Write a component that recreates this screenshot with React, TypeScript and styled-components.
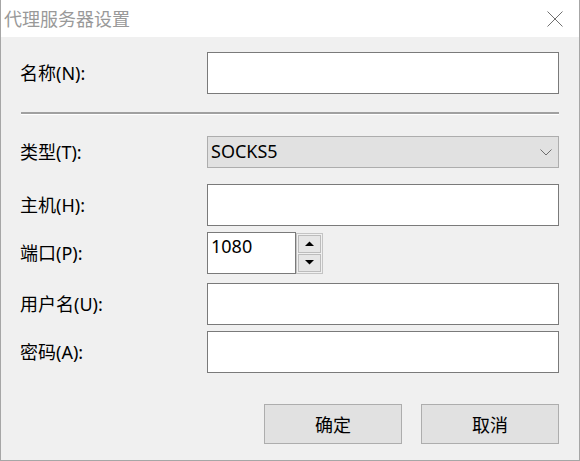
import React from "react";
import styled, { createGlobalStyle } from "styled-components";

const Global = createGlobalStyle`
  html, body { margin: 0; padding: 0; background: #f0f0f0; }
  * { box-sizing: border-box; }
`;

const FONT = `"Noto Sans", "Noto Sans CJK SC", sans-serif`;

const Window = styled.div`
  width: 580px;
  height: 461px;
  background: #f0f0f0;
  border-left: 1px solid #a6a6a6;
  border-right: 1px solid #a6a6a6;
  border-bottom: 1px solid #a6a6a6;
  font-family: ${FONT};
  font-size: 18px;
  color: #000;
  display: flex;
  flex-direction: column;
`;

const TitleBar = styled.div`
  height: 37px;
  background: #fff;
  display: flex;
  align-items: center;
  justify-content: space-between;
  padding: 0 16px 0 3px;
  flex: none;
`;

const Title = styled.span`
  color: #999999;
  font-size: 18px;
  line-height: 1;
  margin-top: 1px;
`;

const CloseBtn = styled.div`
  width: 16px;
  height: 16px;
  display: flex;
  margin-top: 1px;
`;

const Body = styled.div`
  padding: 0 20px 0 19px;
  display: flex;
  flex-direction: column;
`;

const Row = styled.div<{ $mt: number; $h: number }>`
  display: grid;
  grid-template-columns: 187px 352px;
  align-items: center;
  margin-top: ${(p) => p.$mt}px;
  height: ${(p) => p.$h}px;
`;

const Label = styled.label`
  font-size: 18px;
  line-height: 1;
  white-space: nowrap;
`;

const TextBox = styled.input<{ $w?: number }>`
  width: ${(p) => (p.$w ? `${p.$w}px` : "100%")};
  height: 42px;
  border: 1px solid #7a7a7a;
  background: #fff;
  font-family: ${FONT};
  font-size: 18px;
  color: #000;
  padding: 0 3px;
  outline: none;
  margin: 0;
`;

const PortBox = styled(TextBox)`
  padding-bottom: 14px;
`;

const Separator = styled.div`
  margin-top: 18px;
  height: 3px;
  margin-left: 1px;
  border-top: 2px solid #a0a0a0;
  border-bottom: 1px solid #ffffff;
`;

const Select = styled.div`
  height: 32px;
  border: 1px solid #adadad;
  background: #e1e1e1;
  display: flex;
  align-items: center;
  justify-content: space-between;
  padding: 0 6px 0 3px;
  font-size: 18px;
`;

const SelectText = styled.span`
  line-height: 1;
  margin-top: -2px;
`;

const PortWrap = styled.div`
  display: flex;
  align-items: center;
`;

const Spinner = styled.div`
  width: 27px;
  height: 41px;
  border: 1px solid #c4c4c4;
  padding: 1px;
  display: flex;
  flex-direction: column;
  gap: 1px;
`;

const SpinBtn = styled.div`
  flex: 1;
  background: #e6e6e6;
  border: 1px solid #bcbcbc;
  display: flex;
  align-items: center;
  justify-content: center;
`;

const Footer = styled.div`
  margin-top: 31px;
  display: flex;
  justify-content: flex-end;
  gap: 19px;
  height: 40px;
`;

const Button = styled.button`
  width: 138px;
  height: 40px;
  border: 1px solid #adadad;
  background: #e1e1e1;
  font-family: ${FONT};
  font-size: 18px;
  color: #000;
  padding: 0;
  margin: 0;
  display: flex;
  align-items: center;
  justify-content: center;
`;

const Arrow = ({ up }: { up?: boolean }) => (
  <svg width="9" height="5" viewBox="0 0 9 5">
    <polygon points={up ? "0,5 4.5,0.5 9,5" : "0,0 4.5,4.5 9,0"} fill="#000" />
  </svg>
);

export default function App() {
  return (
    <>
      <Global />
      <Window>
        <TitleBar>
          <Title>代理服务器设置</Title>
          <CloseBtn>
            <svg width="16" height="16" viewBox="0 0 16 16">
              <path d="M0.5 0.5 L15.5 15.5 M15.5 0.5 L0.5 15.5" stroke="#707070" strokeWidth="1" fill="none" />
            </svg>
          </CloseBtn>
        </TitleBar>
        <Body>
          <Row $mt={15} $h={42}>
            <Label>名称(N):</Label>
            <TextBox defaultValue="" />
          </Row>
          <Separator />
          <Row $mt={21} $h={32}>
            <Label>类型(T):</Label>
            <Select>
              <SelectText>SOCKS5</SelectText>
              <svg width="12" height="7" viewBox="0 0 12 7">
                <polyline points="0.5,0.5 6,6 11.5,0.5" stroke="#6d6d6d" strokeWidth="1" fill="none" />
              </svg>
            </Select>
          </Row>
          <Row $mt={16} $h={42}>
            <Label>主机(H):</Label>
            <TextBox defaultValue="" />
          </Row>
          <Row $mt={6} $h={42}>
            <Label>端口(P):</Label>
            <PortWrap>
              <PortBox $w={89} defaultValue="1080" />
              <Spinner>
                <SpinBtn><Arrow up /></SpinBtn>
                <SpinBtn><Arrow /></SpinBtn>
              </Spinner>
            </PortWrap>
          </Row>
          <Row $mt={9} $h={42}>
            <Label>用户名(U):</Label>
            <TextBox defaultValue="" />
          </Row>
          <Row $mt={6} $h={42}>
            <Label>密码(A):</Label>
            <TextBox defaultValue="" />
          </Row>
          <Footer>
            <Button>确定</Button>
            <Button>取消</Button>
          </Footer>
        </Body>
      </Window>
    </>
  );
}
